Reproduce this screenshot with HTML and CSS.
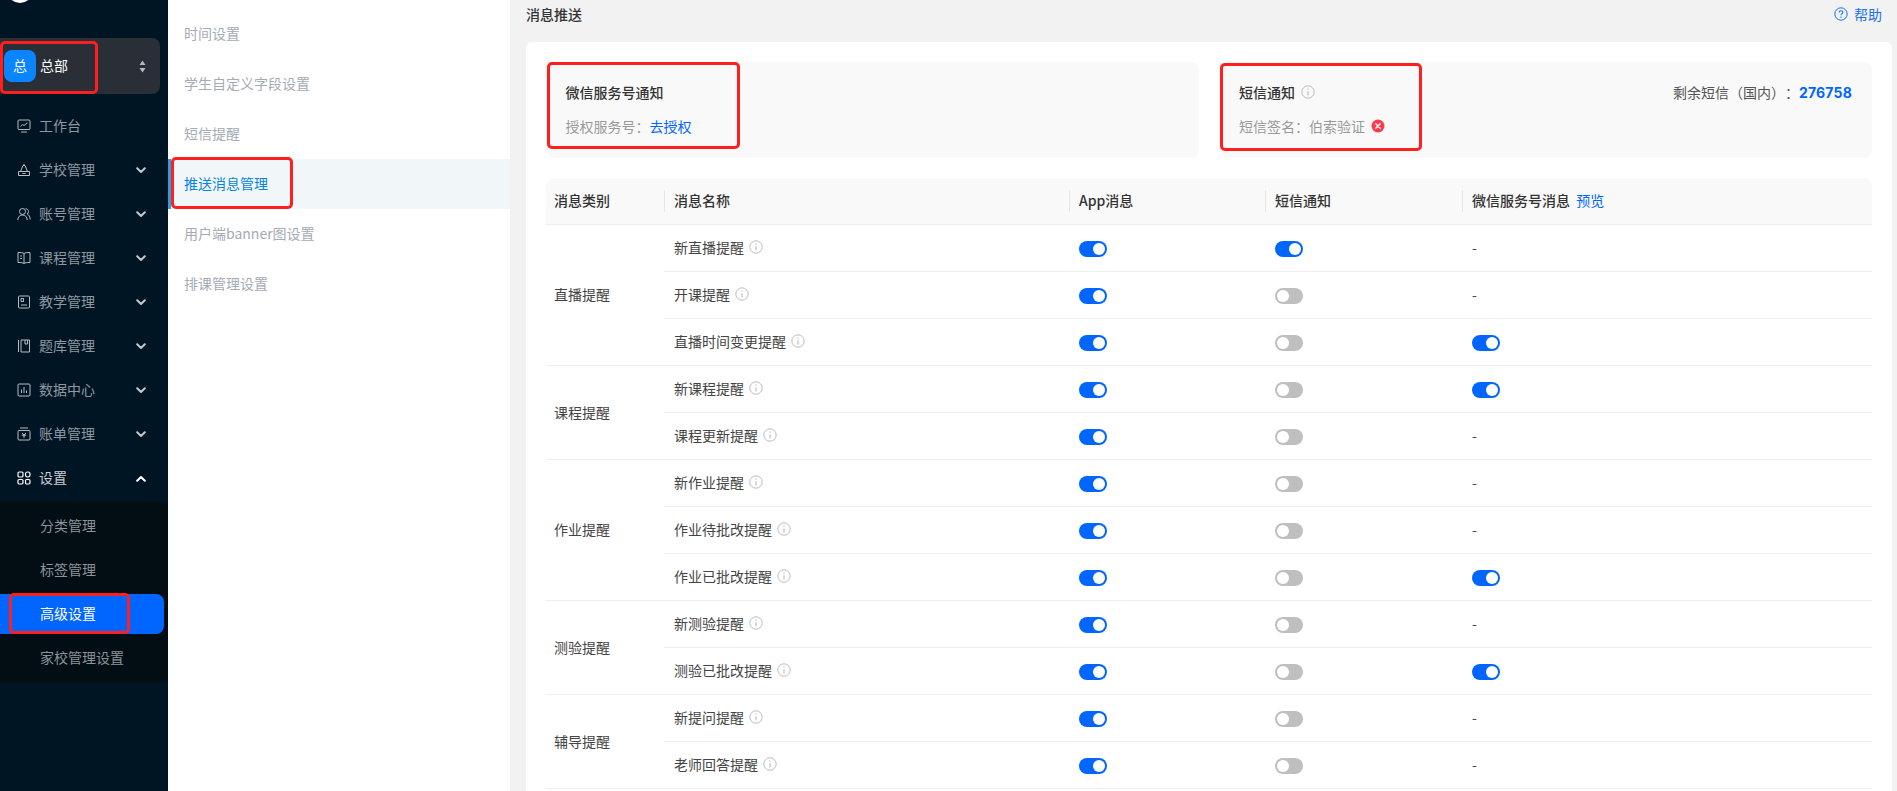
FILE: index.html
```html
<!DOCTYPE html>
<html lang="zh-CN">
<head>
<meta charset="utf-8">
<title>消息推送</title>
<link rel="stylesheet" href="styles.css">
</head>
<body>
<svg class="defs" aria-hidden="true">
  <symbol id="info" viewBox="0 0 14 14"><circle cx="7" cy="7" r="6.200" fill="none" stroke="currentColor"/><path d="M7 6.200v4.200M7 3.400v1.400" stroke="currentColor" stroke-width="1.100" fill="none"/></symbol>
  <symbol id="down" viewBox="0 0 10 7"><path d="M1.200 1.200 5 5l3.800-3.800" fill="none" stroke="currentColor" stroke-width="2" stroke-linecap="round" stroke-linejoin="round"/></symbol>
  <symbol id="up" viewBox="0 0 10 7"><path d="M1.200 5.800 5 2l3.800 3.800" fill="none" stroke="currentColor" stroke-width="2" stroke-linecap="round" stroke-linejoin="round"/></symbol>
</svg>
<div class="app">
  <aside class="sidebar">
    <div class="logo-wrap"><div class="logo"></div></div>
    <div class="switcher">
      <span class="avatar">总</span>
      <span class="switcher-name">总部</span>
      <svg class="updown" viewBox="0 0 7 13"><path d="M3.500 .5 6.500 5H.5zM3.500 12.500 .5 8h6z" fill="currentColor"/></svg>
    </div>
    <nav class="menu">
      <div class="menu-item">
        <svg class="menu-icon" viewBox="0 0 14 14"><rect x="1" y="1" width="12" height="9.500" rx="1"/><path d="M3.500 7.500 5.500 5.500l1.500 1L10.500 3.800M4 13h6"/></svg>
        <span class="menu-label">工作台</span>
      </div>
      <div class="menu-item">
        <svg class="menu-icon" viewBox="0 0 14 14"><path d="M1.500 12.500h11v-4h-11zM3.500 8.500 6 2.500h2l2.500 6M7 .8v1.700M5.500 10.500h3"/></svg>
        <span class="menu-label">学校管理</span>
        <svg class="chev"><use href="#down"/></svg>
      </div>
      <div class="menu-item">
        <svg class="menu-icon" viewBox="0 0 14 14"><circle cx="5.500" cy="4.500" r="3"/><path d="M.8 13c0-3 2-5 4.700-5s4.700 2 4.700 5M8.500 1.700c1.700 0 3 1.300 3 2.900 0 1-.5 1.900-1.300 2.400 1.600.8 3 2.800 3 5.500"/></svg>
        <span class="menu-label">账号管理</span>
        <svg class="chev"><use href="#down"/></svg>
      </div>
      <div class="menu-item">
        <svg class="menu-icon" viewBox="0 0 14 14"><path d="M7 2.500C6 1.700 4 1.500 1 1.500v10c3 0 5 .2 6 1 1-.8 3-1 6-1v-10c-3 0-5 .2-6 1zM7 2.500v10M3.200 5h1.800M3.200 7.500h1.800"/></svg>
        <span class="menu-label">课程管理</span>
        <svg class="chev"><use href="#down"/></svg>
      </div>
      <div class="menu-item">
        <svg class="menu-icon" viewBox="0 0 14 14"><rect x="1.500" y="1" width="11" height="12" rx="1"/><path d="M4 3.500h2.500v3H4zM4 10h6"/></svg>
        <span class="menu-label">教学管理</span>
        <svg class="chev"><use href="#down"/></svg>
      </div>
      <div class="menu-item">
        <svg class="menu-icon" viewBox="0 0 14 14"><path d="M1.500 1v12M4 1h8.500v12H4zM8 1v4h2.500V1"/></svg>
        <span class="menu-label">题库管理</span>
        <svg class="chev"><use href="#down"/></svg>
      </div>
      <div class="menu-item">
        <svg class="menu-icon" viewBox="0 0 14 14"><rect x="1" y="1" width="12" height="12" rx="1"/><path d="M4.500 6.500v3.500M7 4v6M9.500 7.500V10"/></svg>
        <span class="menu-label">数据中心</span>
        <svg class="chev"><use href="#down"/></svg>
      </div>
      <div class="menu-item">
        <svg class="menu-icon" viewBox="0 0 14 14"><rect x="1" y="3.500" width="12" height="9.500" rx="1"/><path d="M3 1h8M5 6l2 2 2-2M4.800 8.300h4.400M7 8v3"/></svg>
        <span class="menu-label">账单管理</span>
        <svg class="chev"><use href="#down"/></svg>
      </div>
      <div class="menu-item menu-item-open">
        <svg class="menu-icon" viewBox="0 0 14 14"><rect x="1" y="1" width="5" height="5" rx="1.200"/><rect x="8.500" y="1" width="4.500" height="5" rx="2"/><rect x="1" y="8.500" width="5" height="4.500" rx="1.200"/><rect x="8.500" y="8.500" width="4.500" height="4.500" rx="1.200"/></svg>
        <span class="menu-label">设置</span>
        <svg class="chev"><use href="#up"/></svg>
      </div>
      <div class="submenu">
        <div class="sub-item">分类管理</div>
        <div class="sub-item">标签管理</div>
        <div class="sub-item sub-item-active">高级设置</div>
        <div class="sub-item">家校管理设置</div>
      </div>
    </nav>
  </aside>

  <div class="subnav">
    <div class="subnav-item">时间设置</div>
    <div class="subnav-item">学生自定义字段设置</div>
    <div class="subnav-item">短信提醒</div>
    <div class="subnav-item subnav-item-active">推送消息管理</div>
    <div class="subnav-item">用户端banner图设置</div>
    <div class="subnav-item">排课管理设置</div>
  </div>

  <main class="main">
    <header class="page-head">
      <h1 class="page-title">消息推送</h1>
      <a class="help">
        <svg class="help-icon" viewBox="0 0 14 14"><circle cx="7" cy="7" r="6.200" fill="none" stroke="currentColor"/><path d="M5.200 5.400C5.200 4.400 6 3.700 7 3.700s1.800.7 1.800 1.600c0 1.300-1.800 1.400-1.800 2.900" fill="none" stroke="currentColor" stroke-width="1.100"/><path d="M7 9.500v1.200" stroke="currentColor" stroke-width="1.200"/></svg>
        帮助
      </a>
    </header>
    <section class="card">
      <div class="notices">
        <div class="notice">
          <div class="notice-col">
            <div class="notice-title">微信服务号通知</div>
            <div class="notice-sub">授权服务号：<a class="link">去授权</a></div>
          </div>
        </div>
        <div class="notice">
          <div class="notice-col">
            <div class="notice-title">短信通知 <svg class="info"><use href="#info"/></svg></div>
            <div class="notice-sub">短信签名：伯索验证
              <svg class="err" viewBox="0 0 14 14"><circle cx="7" cy="7" r="6.500" fill="#ff3b4a"/><path d="M4.800 4.800l4.400 4.400M9.200 4.800l-4.400 4.400" stroke="#fff" stroke-width="1.500" stroke-linecap="round"/></svg>
            </div>
          </div>
          <div class="remain">剩余短信（国内）：<b class="remain-num">276758</b></div>
        </div>
      </div>

      <table class="table">
        <colgroup><col class="c1"><col class="c2"><col class="c3"><col class="c4"><col class="c5"></colgroup>
        <thead>
          <tr>
            <th>消息类别</th>
            <th class="div">消息名称</th>
            <th class="div">App消息</th>
            <th class="div">短信通知</th>
            <th class="div">微信服务号消息 <a class="link link-preview">预览</a></th>
          </tr>
        </thead>
        <tbody>
          <tr>
            <td class="cat" rowspan="3">直播提醒</td>
            <td>新直播提醒 <svg class="info"><use href="#info"/></svg></td>
            <td><span class="sw on"><i></i></span></td>
            <td><span class="sw on"><i></i></span></td>
            <td>-</td>
          </tr>
          <tr>
            <td>开课提醒 <svg class="info"><use href="#info"/></svg></td>
            <td><span class="sw on"><i></i></span></td>
            <td><span class="sw"><i></i></span></td>
            <td>-</td>
          </tr>
          <tr>
            <td>直播时间变更提醒 <svg class="info"><use href="#info"/></svg></td>
            <td><span class="sw on"><i></i></span></td>
            <td><span class="sw"><i></i></span></td>
            <td><span class="sw on"><i></i></span></td>
          </tr>
          <tr>
            <td class="cat" rowspan="2">课程提醒</td>
            <td>新课程提醒 <svg class="info"><use href="#info"/></svg></td>
            <td><span class="sw on"><i></i></span></td>
            <td><span class="sw"><i></i></span></td>
            <td><span class="sw on"><i></i></span></td>
          </tr>
          <tr>
            <td>课程更新提醒 <svg class="info"><use href="#info"/></svg></td>
            <td><span class="sw on"><i></i></span></td>
            <td><span class="sw"><i></i></span></td>
            <td>-</td>
          </tr>
          <tr>
            <td class="cat" rowspan="3">作业提醒</td>
            <td>新作业提醒 <svg class="info"><use href="#info"/></svg></td>
            <td><span class="sw on"><i></i></span></td>
            <td><span class="sw"><i></i></span></td>
            <td>-</td>
          </tr>
          <tr>
            <td>作业待批改提醒 <svg class="info"><use href="#info"/></svg></td>
            <td><span class="sw on"><i></i></span></td>
            <td><span class="sw"><i></i></span></td>
            <td>-</td>
          </tr>
          <tr>
            <td>作业已批改提醒 <svg class="info"><use href="#info"/></svg></td>
            <td><span class="sw on"><i></i></span></td>
            <td><span class="sw"><i></i></span></td>
            <td><span class="sw on"><i></i></span></td>
          </tr>
          <tr>
            <td class="cat" rowspan="2">测验提醒</td>
            <td>新测验提醒 <svg class="info"><use href="#info"/></svg></td>
            <td><span class="sw on"><i></i></span></td>
            <td><span class="sw"><i></i></span></td>
            <td>-</td>
          </tr>
          <tr>
            <td>测验已批改提醒 <svg class="info"><use href="#info"/></svg></td>
            <td><span class="sw on"><i></i></span></td>
            <td><span class="sw"><i></i></span></td>
            <td><span class="sw on"><i></i></span></td>
          </tr>
          <tr>
            <td class="cat" rowspan="2">辅导提醒</td>
            <td>新提问提醒 <svg class="info"><use href="#info"/></svg></td>
            <td><span class="sw on"><i></i></span></td>
            <td><span class="sw"><i></i></span></td>
            <td>-</td>
          </tr>
          <tr>
            <td>老师回答提醒 <svg class="info"><use href="#info"/></svg></td>
            <td><span class="sw on"><i></i></span></td>
            <td><span class="sw"><i></i></span></td>
            <td>-</td>
          </tr>
        </tbody>
      </table>
    </section>
  </main>
</div>
<div class="mark mark-1"></div>
<div class="mark mark-2"></div>
<div class="mark mark-3"></div>
<div class="mark mark-4"></div>
<div class="mark mark-5"></div>
</body>
</html>
```
FILE: styles.css
```css
* { box-sizing: border-box; }
html, body { margin: 0; height: 100%; overflow: hidden; }
body {
  font-family: "Noto Sans CJK SC", "Inter", sans-serif;
  font-size: 14px;
  color: #333;
  background: #f2f2f2;
  text-spacing-trim: space-all;
}
.defs { display: none; }
.app { display: flex; height: 791px; overflow: hidden; }

/* sidebar */
.sidebar { width: 168px; flex: none; background: #001524; overflow: hidden; }
.logo-wrap { height: 38px; padding-left: 7px; overflow: hidden; }
.logo { width: 26px; height: 26px; margin-top: -23px; border-radius: 50%; background: #fff; }
.switcher {
  display: flex; align-items: center;
  width: 160px; height: 56px;
  padding-left: 4px; padding-right: 14px;
  background: #292e37; border-radius: 0 8px 8px 0;
}
.avatar {
  width: 32px; height: 32px; border-radius: 8px;
  background: #0a84ff; color: #fff; font-size: 14px;
  display: flex; align-items: center; justify-content: center;
  padding-bottom: 2px;
}
.switcher-name { margin-left: 4px; color: #fff; flex: 1; line-height: 18px; padding-bottom: 2px; }
.updown { width: 7px; height: 13px; color: #b5b8bd; }
.menu { margin-top: 10px; }
.menu-item {
  display: flex; align-items: center;
  height: 44px; padding: 0 22px 0 17px;
  color: #8f98a0;
}
.menu-icon {
  width: 14px; height: 14px; flex: none; margin-right: 8px;
  fill: none; stroke: currentColor; stroke-width: 1; color: #b6bdc2;
}
.menu-label { flex: 1; line-height: 18px; padding-bottom: 2px; }
.chev { width: 10px; height: 7px; color: #c3c8cc; flex: none; }
.menu-item-open { color: #c9ced2; }
.menu-item-open .menu-icon { color: #fff; stroke-width: 1.2; }
.menu-item-open .chev { color: #fff; }
.submenu {
  display: flex; flex-direction: column; gap: 4px;
  margin-top: 2px; padding: 4px 0; background: #020d14;
}
.sub-item {
  height: 40px; margin-right: 4px; padding-left: 40px;
  line-height: 38px; color: #8d9499;
}
.sub-item-active { background: #0066ff; color: #fff; border-radius: 0 8px 8px 0; }

/* second column */
.subnav { width: 342px; flex: none; background: #fff; padding-top: 9px; }
.subnav-item {
  height: 50px; padding-left: 16px;
  line-height: 48px; color: #a3acb4;
}
.subnav-item-active {
  background: #f1f6f9; color: #0a84e0;
  border-left: 3px solid #2d9fe0; padding-left: 13px;
}

/* main */
.main { flex: 1; min-width: 0; padding: 0 5px 0 16px; }
.page-head {
  display: flex; align-items: center; justify-content: space-between;
  height: 42px; padding: 0 10px 14px 0;
}
.page-title { margin: 0; font-size: 14px; font-weight: 500; color: #333; line-height: 28px; }
.help { display: flex; align-items: center; color: #1a73e8; line-height: 20px; }
.help-icon { width: 14px; height: 14px; margin-right: 6px; }
.card { background: #fff; border-radius: 6px; padding: 20px; height: 760px; }
.notices { display: flex; gap: 21px; height: 96px; }
.notice {
  flex: 1; display: flex; justify-content: space-between;
  background: #f9f9f9; border-radius: 8px;
  padding: 20px 20px 0 19.5px;
}
.notice-title { font-weight: 500; line-height: 20px; color: #333; display: flex; align-items: center; gap: 6px; }
.notice-sub { margin-top: 14px; line-height: 20px; color: #999; display: flex; align-items: center; }
.err { width: 14px; height: 14px; margin-left: 6px; }
.link { color: #0066ff; }
.remain { line-height: 20px; color: #555; }
.remain-num { color: #0066ff; font-family: "Inter", sans-serif; font-weight: 700; font-size: 14px; letter-spacing: .2px; }

/* table */
.table {
  width: 1326px; margin-top: 20px;
  table-layout: fixed;
  border-collapse: separate; border-spacing: 0;
}
.c1 { width: 118px; }
.c2 { width: 405px; }
.c3 { width: 196px; }
.c4 { width: 197px; }
.c5 { width: 410px; }
.table th {
  height: 47px; padding: 0 0 2px 10px;
  text-align: left; font-weight: 500; color: #333;
  background-color: #f9f9f9;
  border-bottom: 1px solid #eee;
}
.table th:first-child { padding-left: 8px; border-top-left-radius: 8px; }
.table th:last-child { border-top-right-radius: 8px; }
.table th.div {
  background-image: linear-gradient(#e6e6e6, #e6e6e6);
  background-repeat: no-repeat;
  background-position: left center;
  background-size: 1px 22px;
}
.link-preview { font-weight: 400; margin-left: 3px; }
.table td {
  height: 47px; padding: 0 0 2px 10px;
  border-bottom: 1px solid #eee;
  color: #444; white-space: nowrap;
}
.table td.cat { padding-left: 8px; }
.info {
  width: 14px; height: 14px; color: #bbb;
  vertical-align: -1px; margin-left: 2px;
}
.notice-title .info { margin-left: 0; }
.sw {
  display: flex; align-items: center;
  width: 28px; height: 16px; padding: 0 2px; margin-top: 4px;
  background: #bfbfbf; border-radius: 8px;
}
.sw i { width: 12px; height: 12px; border-radius: 50%; background: #fff; display: block; }
.sw.on { background: #0066ff; justify-content: flex-end; }

/* annotation frames drawn over the screenshot */
.mark { position: absolute; border: 3px solid #ff1f1f; border-radius: 5px; pointer-events: none; }
.mark-1 { left: 0; top: 41px; width: 98px; height: 53px; }
.mark-2 { left: 171px; top: 157px; width: 122px; height: 52px; }
.mark-3 { left: 9px; top: 593px; width: 121px; height: 41px; }
.mark-4 { left: 547px; top: 62px; width: 193px; height: 87px; }
.mark-5 { left: 1220px; top: 63px; width: 202px; height: 88px; }
```
